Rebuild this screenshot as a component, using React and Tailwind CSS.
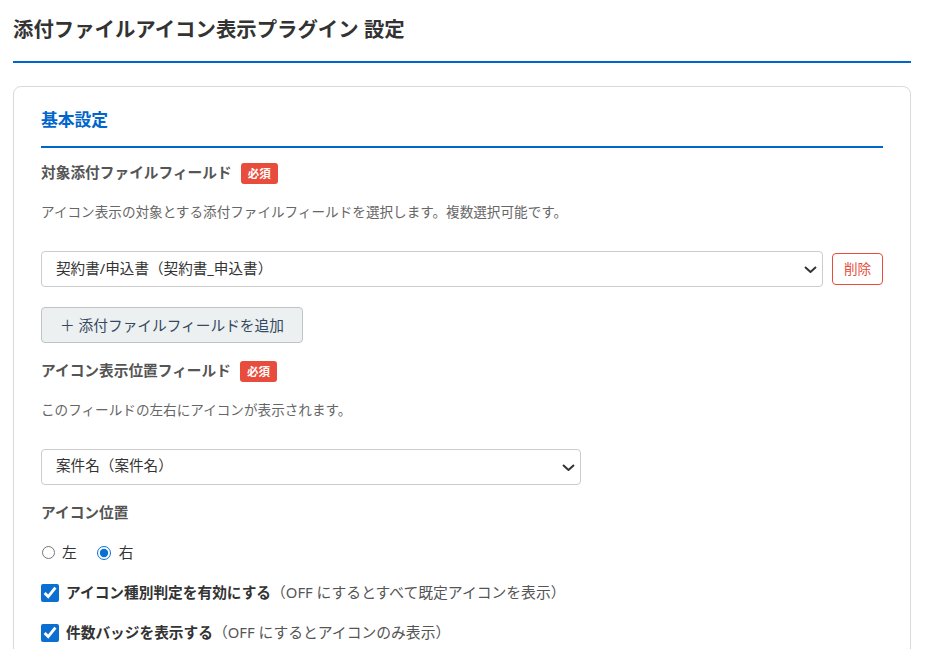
const font = { fontFamily: '"Noto Sans", "Noto Sans CJK JP", sans-serif' };

function Badge() {
  return (
    <span className="ml-[9px] mt-[3px] inline-flex h-[21px] w-[37px] items-center justify-center rounded-[3px] bg-[#e74c3c] text-[11.5px] font-bold leading-none text-white">
      必須
    </span>
  );
}

function Label({ children, badge }) {
  return (
    <div className="flex h-[22px] items-center text-[14.7px] font-bold leading-[22px] text-[#555]">
      {children}
      {badge && <Badge />}
    </div>
  );
}

function Select({ text, className, selectClass }) {
  return (
    <div className={`relative h-[36px] ${className}`}>
      <select
        defaultValue={text}
        className={`block h-full w-full appearance-none rounded-[4px] border border-[#ccc] bg-white pl-[14px] pr-[24px] text-[14.6px] text-[#333] ${selectClass}`}
      >
        <option>{text}</option>
      </select>
      <svg
        viewBox="0 0 13 7"
        className="pointer-events-none absolute right-[6px] top-[15px] h-[7px] w-[13px]"
        fill="none"
        stroke="#333"
        strokeWidth="2"
      >
        <path d="M1 1l5.5 5L12 1" />
      </svg>
    </div>
  );
}

function Check({ strong, note, className }) {
  return (
    <label className={`flex h-[22px] items-center text-[14.7px] text-[#333] ${className}`}>
      <input type="checkbox" defaultChecked className="mr-[7px] h-[18px] w-[18px] accent-[#0a6fd1]" />
      <span className="-mt-[2px] font-bold">{strong}</span>
      <span className="-mt-[2px] text-[14.8px] text-[#555]">{note}</span>
    </label>
  );
}

export default function App() {
  return (
    <div style={font} className="h-[649px] overflow-hidden bg-white px-[13px] pr-[14px]">
      <h1 className="flex h-[63px] items-center border-b-2 border-[#0066cc] pb-[2px] text-[20.4px] font-bold text-[#333]">
        添付ファイルアイコン表示プラグイン 設定
      </h1>
      <div className="mt-[23px] rounded-t-[8px] border border-[#d9d9d9] px-[27px] pb-[40px] pt-[20px]">
        <h2 className="flex h-[41px] items-start border-b-2 border-[#0066cc] text-[16.8px] font-bold leading-[26px] text-[#0066cc]">
          基本設定
        </h2>
        <div className="mt-[13px]">
          <Label badge>対象添付ファイルフィールド</Label>
        </div>
        <p className="mt-[18px] h-[22px] text-[13.6px] leading-[22px] text-[#666]">
          アイコン表示の対象とする添付ファイルフィールドを選択します。複数選択可能です。
        </p>
        <div className="mt-[28px] flex items-center gap-[9px]">
          <Select text="契約書/申込書（契約書_申込書）" className="min-w-0 flex-1" />
          <button className="h-[32px] w-[51px] rounded-[4px] border border-[#e74c3c] text-[13.6px] text-[#e74c3c]">
            削除
          </button>
        </div>
        <button className="mt-[20px] block h-[36px] w-[262px] rounded-[4px] border border-[#bdc3c7] bg-[#ecf0f1] text-[14.7px] text-[#34495e]">
          ＋ 添付ファイルフィールドを追加
        </button>
        <div className="mt-[16px]">
          <Label badge>アイコン表示位置フィールド</Label>
        </div>
        <p className="mt-[18px] h-[22px] text-[13.6px] leading-[22px] text-[#666]">
          このフィールドの左右にアイコンが表示されます。
        </p>
        <div className="mt-[28px]">
          <Select text="案件名（案件名）" className="w-[540px]" selectClass="pb-[3px]" />
        </div>
        <div className="mt-[16px]">
          <Label>アイコン位置</Label>
        </div>
        <div className="mt-[19px] flex h-[22px] items-center text-[14.7px] text-[#333]">
          <label className="flex items-center">
            <input type="radio" name="pos" className="m-0 ml-[1px] mr-[7px] h-[13px] w-[13px]" />
            <span className="-mt-[1px]">左</span>
          </label>
          <label className="ml-[20px] flex items-center">
            <input type="radio" name="pos" defaultChecked className="m-0 mr-[8px] h-[14px] w-[14px] accent-[#0a6fd1]" />
            <span className="-mt-[1px]">右</span>
          </label>
        </div>
        <Check className="mt-[18px]" strong="アイコン種別判定を有効にする" note="（OFF にするとすべて既定アイコンを表示）" />
        <Check className="mt-[18px]" strong="件数バッジを表示する" note="（OFF にするとアイコンのみ表示）" />
      </div>
    </div>
  );
}
